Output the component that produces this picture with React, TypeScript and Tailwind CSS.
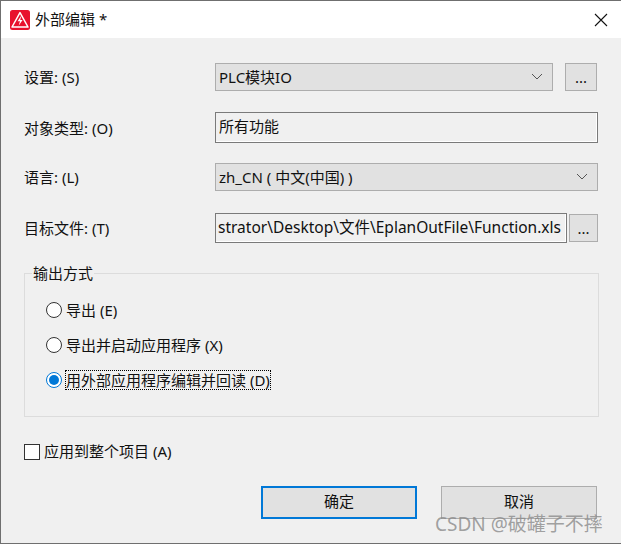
const FONT = "font-['Noto_Sans','Noto_Sans_CJK_SC',sans-serif]";

function Chevron() {
  return (
    <svg width="12" height="7" viewBox="0 0 12 7" fill="none" stroke="#555" strokeWidth="1">
      <path d="M1 1l5 5 5-5" />
    </svg>
  );
}

function Combo({ value, className }: { value: string; className: string }) {
  return (
    <div className={`flex h-[28px] items-center justify-between border border-[#adadad] bg-[#e1e1e1] pb-[1px] pl-[3px] pr-[9px] ${className}`}>
      <span>{value}</span>
      <Chevron />
    </div>
  );
}

function Row({ label, className, children }: { label: string; className: string; children: React.ReactNode }) {
  return (
    <div className={`flex items-center pl-[23px] ${className}`}>
      <span className="w-[191px] shrink-0">{label}</span>
      {children}
    </div>
  );
}

function Radio({ label, checked }: { label: string; checked?: boolean }) {
  return (
    <div className="flex h-[20px] items-center">
      <span className={`flex h-[16px] w-[16px] items-center justify-center rounded-full border bg-white ${checked ? "border-[#0078d7]" : "border-[#333]"}`}>
        {checked && <span className="h-[10px] w-[10px] rounded-full bg-[#0078d7]" />}
      </span>
      <span className={`ml-[3px] ${checked ? "border border-dotted border-black" : "border border-transparent"}`}>{label}</span>
    </div>
  );
}

export default function App() {
  return (
    <div className={`${FONT} relative h-[544px] w-[621px] overflow-hidden border-l border-t border-b border-[#6f6f6f] bg-[#f0f0f0] text-[15px] leading-[18px] text-[#111]`}>
      <div className="flex h-[37px] items-center justify-between bg-white pl-[9px] pr-[13px]">
        <div className="flex items-center">
          <svg width="20" height="20" viewBox="0 0 20 20">
            <rect width="20" height="20" rx="2.5" fill="#e8112d" />
            <path d="M10 2.6L18 17H2Z" fill="none" stroke="#fff" strokeWidth="1.5" strokeLinejoin="round" />
            <path d="M11.4 5.5L7.6 11.2h2.4L8.6 15.8l4-5.9h-2.4z" fill="#fff" />
          </svg>
          <span className="ml-[5px] pb-[1px]">外部编辑 *</span>
        </div>
        <svg width="14" height="14" viewBox="0 0 14 14" stroke="#111" strokeWidth="1.1">
          <path d="M1 1l12 12M13 1L1 13" />
        </svg>
      </div>

      <Row label="设置: (S)" className="mt-[25px]">
        <Combo value="PLC模块IO" className="w-[338px]" />
        <div className="ml-[12px] flex h-[28px] w-[32px] items-center justify-center border border-[#adadad] bg-[#e1e1e1]">...</div>
      </Row>
      <Row label="对象类型: (O)" className="mt-[21px]">
        <div className="flex h-[31px] w-[383px] items-center border border-[#7a7a7a] bg-[#f0f0f0] pb-[3px] pl-[3px] shadow-[inset_-1px_-1px_0_#fff]">所有功能</div>
      </Row>
      <Row label="语言: (L)" className="mt-[20px]">
        <Combo value="zh_CN ( 中文(中国) )" className="w-[383px]" />
      </Row>
      <Row label="目标文件: (T)" className="mt-[22px]">
        <div className="flex h-[30px] w-[352px] items-center overflow-hidden border border-[#7a7a7a] bg-[#f0f0f0] pb-[2px] pl-[2px] shadow-[inset_-1px_-1px_0_#fff]">
          <span className="whitespace-nowrap text-[15.5px]">strator\Desktop\文件\EplanOutFile\Function.xls</span>
        </div>
        <div className="ml-[2px] flex h-[28px] w-[29px] items-center justify-center border border-[#adadad] bg-[#e1e1e1]">...</div>
      </Row>

      <div className="relative ml-[23px] mt-[30px] h-[144px] w-[575px] border border-[#dcdcdc]">
        <span className="absolute left-[7px] top-[-10px] bg-[#f0f0f0] px-[1px]">输出方式</span>
        <div className="flex flex-col gap-[15px] pl-[21px] pt-[26px]">
          <Radio label="导出 (E)" />
          <Radio label="导出并启动应用程序 (X)" />
          <Radio label="用外部应用程序编辑并回读 (D)" checked />
        </div>
      </div>

      <div className="ml-[23px] mt-[25px] flex items-center">
        <span className="h-[16px] w-[16px] border border-[#333] bg-white" />
        <span className="ml-[4px] pb-[1px]">应用到整个项目 (A)</span>
      </div>

      <div className="ml-[260px] mt-[25px] flex gap-[24px]">
        <div className="flex h-[33px] w-[156px] items-center justify-center border-2 border-[#0078d7] bg-[#e1e1e1] pb-[4px]">确定</div>
        <div className="flex h-[33px] w-[156px] items-center justify-center border border-[#adadad] bg-[#e1e1e1] pb-[4px]">取消</div>
      </div>

      <span className="absolute left-[434px] top-[514px] text-[19px] text-[#8a8a8a]/80">CSDN @破罐子不摔</span>
    </div>
  );
}
